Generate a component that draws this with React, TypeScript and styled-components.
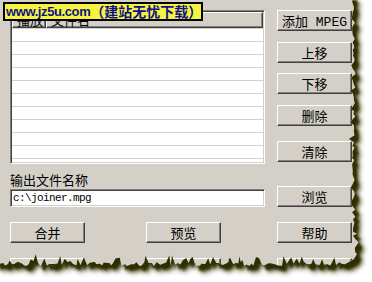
import React from "react";
import styled, { createGlobalStyle } from "styled-components";

const GlobalStyle = createGlobalStyle`
  html, body {
    margin: 0;
    padding: 0;
    background: #ffffff;
  }
`;

const Dialog = styled.div`
  position: relative;
  width: 372px;
  height: 282px;
  box-sizing: border-box;
  overflow: hidden;
  padding: 10px 0 0 10px;
  background: #d4d0c8;
  font-family: "Noto Sans CJK SC", "Liberation Sans", sans-serif;
  font-size: 13px;
  color: #000;
`;

const Top = styled.div`
  display: flex;
  gap: 12px;
`;

const LeftCol = styled.div`
  display: flex;
  flex-direction: column;
  width: 255px;
`;

const RightCol = styled.div`
  display: flex;
  flex-direction: column;
  width: 75px;
`;

const ListBox = styled.div`
  height: 154px;
  box-sizing: border-box;
  overflow: hidden;
  background: #ffffff;
  border: 1px solid;
  border-color: #808080 #ffffff #ffffff #808080;
  box-shadow: inset 1px 1px #404040, inset -1px -1px #d4d0c8;
  padding: 1px;
`;

const Header = styled.div`
  display: flex;
  height: 16px;
`;

const HeaderCell = styled.div<{ $w?: number }>`
  ${(p) => (p.$w ? `width: ${p.$w}px;` : "flex: 1;")}
  box-sizing: border-box;
  height: 16px;
  padding-left: 4px;
  background: #d4d0c8;
  border-top: 1px solid #ffffff;
  border-left: 1px solid #ffffff;
  border-right: 1px solid #404040;
  border-bottom: 1px solid #404040;
  box-shadow: inset -1px -1px #808080;
  font-size: 13px;
  line-height: 14px;
  white-space: nowrap;
`;

const Row = styled.div`
  height: 13px;
  box-sizing: border-box;
  border-top: 1px solid #d4d0c8;
  flex-shrink: 0;
`;

const Label = styled.div`
  margin-top: 8px;
  height: 15px;
  line-height: 15px;
  font-size: 13px;
`;

const PathInput = styled.div`
  margin-top: 2px;
  height: 18px;
  box-sizing: border-box;
  background: #ffffff;
  border: 1px solid;
  border-color: #808080 #ffffff #ffffff #808080;
  box-shadow: inset 1px 1px #404040, inset -1px -1px #d4d0c8;
  padding: 0 2px;
  font-family: "Liberation Mono", monospace;
  font-size: 11px;
  letter-spacing: -0.6px;
  line-height: 16px;
  white-space: nowrap;
`;

const Button = styled.div<{ $mt?: number; $ml?: number }>`
  width: 75px;
  height: 21px;
  margin-top: ${(p) => p.$mt ?? 0}px;
  margin-left: ${(p) => p.$ml ?? 0}px;
  box-sizing: border-box;
  display: flex;
  align-items: center;
  justify-content: center;
  flex-shrink: 0;
  background: #d4d0c8;
  border-top: 1px solid #ffffff;
  border-left: 1px solid #ffffff;
  border-right: 1px solid #404040;
  border-bottom: 1px solid #404040;
  box-shadow: inset -1px -1px #808080;
  font-family: "Liberation Mono", "Noto Sans CJK SC", monospace;
  font-size: 13px;
  white-space: nowrap;
`;

const ButtonRow = styled.div<{ $mt: number }>`
  display: flex;
  margin-top: ${(p) => p.$mt}px;
`;

const Banner = styled.div`
  position: absolute;
  left: 3px;
  top: 2px;
  width: 200px;
  height: 19px;
  box-sizing: border-box;
  border: 2px solid #000000;
  background: #f4f43e;
  display: flex;
  align-items: center;
  padding-left: 1px;
  color: #10108c;
  font-weight: bold;
  white-space: nowrap;
  z-index: 2;
`;

const BannerUrl = styled.span`
  font-family: "Liberation Sans", sans-serif;
  font-size: 13px;
  letter-spacing: -0.4px;
`;

const BannerCn = styled.span`
  font-family: "Noto Sans CJK SC", sans-serif;
  font-size: 14px;
  line-height: 15px;
`;

const Tear = styled.svg`
  position: absolute;
  left: 0;
  top: 0;
  z-index: 3;
  pointer-events: none;
`;

function lcg(seed: number) {
  let s = seed;
  return () => {
    s = (s * 1664525 + 1013904223) % 4294967296;
    return s / 4294967296;
  };
}

function tornEdge(): string {
  const r = lcg(11);
  const pts: [number, number][] = [
    [-5, -5],
    [353, -5],
  ];
  let y = -5;
  while (y < 250) {
    y += 1.5 + r() * 3;
    let x = 353.8 + (r() - 0.5) * 3.5;
    if (r() < 0.15) x -= 2 + r() * 3;
    if (y > 232 && y < 250) x += 3;
    pts.push([x, y]);
  }
  pts.push([357, 254], [354, 259], [349, 262]);
  let x = 348;
  while (x > -5) {
    x -= 1 + r() * 2.5;
    let yy = 264 + (r() - 0.5) * 4;
    if (r() < 0.3) yy -= 3 + r() * 5;
    pts.push([x, yy]);
  }
  pts.push([-5, 264]);
  return "M" + pts.map(([a, b]) => `${a.toFixed(1)} ${b.toFixed(1)}`).join(" L") + " Z";
}

const EDGE = tornEdge();

const TornEdge: React.FC = () => (
  <Tear width={372} height={282} viewBox="0 0 372 282">
    <defs>
      <filter id="tearBlur" x="-10%" y="-10%" width="120%" height="120%">
        <feGaussianBlur stdDeviation="2.6" />
      </filter>
      <filter id="tearCore" x="-10%" y="-10%" width="120%" height="120%">
        <feGaussianBlur stdDeviation="1.2" />
      </filter>
      <mask id="outside" maskUnits="userSpaceOnUse" x="-10" y="-10" width="392" height="302">
        <rect x="-10" y="-10" width="392" height="302" fill="#fff" />
        <path d={EDGE} fill="#000" />
      </mask>
    </defs>
    <path d={`M-10 -10 H382 V292 H-10 Z ${EDGE}`} fillRule="evenodd" fill="#ffffff" />
    <g mask="url(#outside)">
      <path d={EDGE} transform="translate(6,7)" fill="#3a3a0c" filter="url(#tearBlur)" />
      <path d={EDGE} transform="translate(4,5)" fill="#2e2e04" filter="url(#tearCore)" />
    </g>
  </Tear>
);

const App: React.FC = () => {
  const rows = Array.from({ length: 11 });
  return (
    <>
      <GlobalStyle />
      <Dialog>
        <Banner>
          <BannerUrl>www.jz5u.com</BannerUrl>
          <BannerCn>（建站无忧下载）</BannerCn>
        </Banner>
        <Top>
          <LeftCol>
            <ListBox>
              <Header>
                <HeaderCell $w={34}>播放</HeaderCell>
                <HeaderCell>文件名</HeaderCell>
              </Header>
              {rows.map((_, i) => (
                <Row key={i} />
              ))}
            </ListBox>
            <Label>输出文件名称</Label>
            <PathInput>c:\joiner.mpg</PathInput>
          </LeftCol>
          <RightCol>
            <Button>添加 MPEG</Button>
            <Button $mt={11}>上移</Button>
            <Button $mt={10}>下移</Button>
            <Button $mt={11}>删除</Button>
            <Button $mt={15}>清除</Button>
            <Button $mt={24}>浏览</Button>
          </RightCol>
        </Top>
        <ButtonRow $mt={15}>
          <Button>合并</Button>
          <Button $ml={61}>预览</Button>
          <Button $ml={56}>帮助</Button>
        </ButtonRow>
        <ButtonRow $mt={15}>
          <Button>关于</Button>
          <Button $ml={61}>设置</Button>
          <Button $ml={56}>退出</Button>
        </ButtonRow>
        <TornEdge />
      </Dialog>
    </>
  );
};

export default App;
